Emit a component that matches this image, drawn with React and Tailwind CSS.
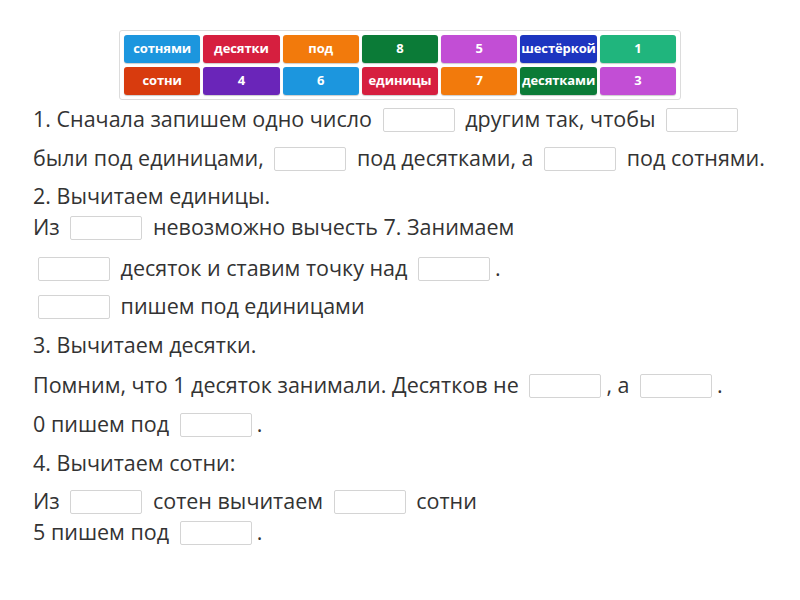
import React from "react";

const tiles = [
  ["сотнями", "bg-[#1c96de]"],
  ["десятки", "bg-[#d61f3f]"],
  ["под", "bg-[#f27a0c]"],
  ["8", "bg-[#0b7b37]"],
  ["5", "bg-[#c24ed5]"],
  ["шестёркой", "bg-[#1d35c0]"],
  ["1", "bg-[#20b57d]"],
  ["сотни", "bg-[#d83b0e]"],
  ["4", "bg-[#6a25b9]"],
  ["6", "bg-[#1c96de]"],
  ["единицы", "bg-[#d61f3f]"],
  ["7", "bg-[#f27a0c]"],
  ["десятками", "bg-[#0b7b37]"],
  ["3", "bg-[#c24ed5]"],
];

function B() {
  return (
    <span className="inline-block align-middle w-[72px] h-[24px] mx-[5px] border border-[#d4d4d4] bg-white rounded-[2px] -mt-[3px]"></span>
  );
}

function Row({ mt, children }) {
  return (
    <div className={`h-[31px] leading-[31px] whitespace-pre ${mt}`}>{children}</div>
  );
}

export default function App() {
  return (
    <div
      className="w-[800px] h-[600px] bg-white text-[#333] overflow-hidden"
      style={{ fontFamily: '"Open Sans", sans-serif' }}
    >
      <div className="pt-[30px]">
        <div className="w-[562px] mx-auto border border-[#dcdcdc] rounded-[3px] p-[4px] grid grid-cols-7 gap-x-[3px] gap-y-[4px] bg-white">
          {tiles.map(([t, c], i) => (
            <div
              key={i}
              className={`${c} h-[28px] rounded-[3px] flex items-center justify-center text-white font-bold text-[13px] tracking-[-0.1px] shadow-[0_1px_1px_rgba(0,0,0,0.2)]`}
            >
              {t}
            </div>
          ))}
        </div>
      </div>
      <div className="pl-[33px] text-[21.5px] mt-[3px]">
        <Row mt="mt-0">1. Сначала запишем одно число <B /> другим так, чтобы <B /></Row>
        <Row mt="mt-[8px]">были под единицами, <B /> под десятками, а <B /> под сотнями.</Row>
        <Row mt="mt-[7px]">2. Вычитаем единицы.</Row>
        <Row mt="mt-0">Из <B /> невозможно вычесть 7. Занимаем</Row>
        <Row mt="mt-[10px]"><B /> десяток и ставим точку над <B />.</Row>
        <Row mt="mt-[7px]"><B /> пишем под единицами</Row>
        <Row mt="mt-[8px]">3. Вычитаем десятки.</Row>
        <Row mt="mt-[9px]">Помним, что 1 десяток занимали. Десятков не <B />, а <B />.</Row>
        <Row mt="mt-[8px]">0 пишем под <B />.</Row>
        <Row mt="mt-[8px]">4. Вычитаем сотни:</Row>
        <Row mt="mt-[7px]">Из <B /> сотен вычитаем <B /> сотни</Row>
        <Row mt="mt-0">5 пишем под <B />.</Row>
      </div>
    </div>
  );
}
